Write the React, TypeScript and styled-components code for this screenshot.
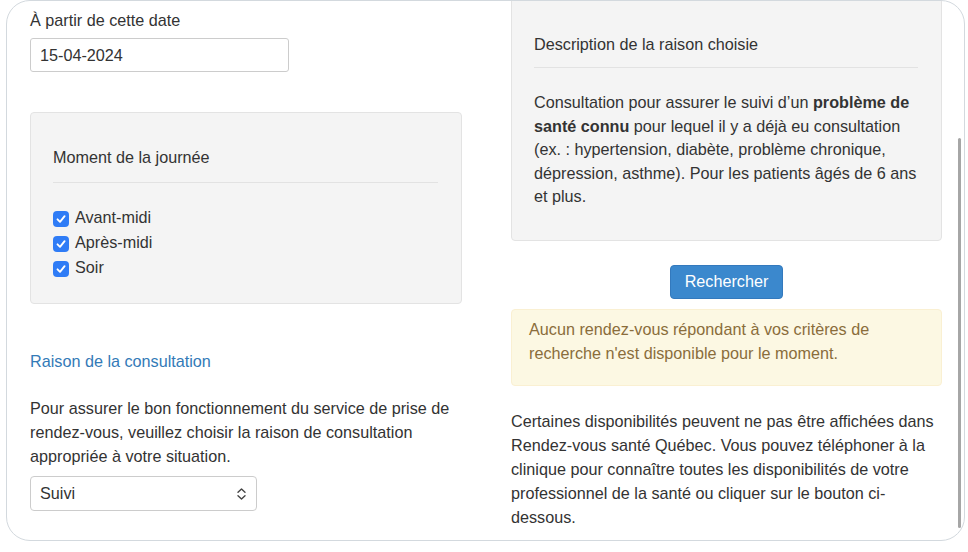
import React from 'react'
import styled, { createGlobalStyle } from 'styled-components'

const GlobalStyle = createGlobalStyle`
  html, body {
    margin: 0;
    padding: 0;
    background: #ffffff;
  }
  body {
    font-family: "Liberation Sans", Arial, sans-serif;
    font-size: 16.2px;
    color: #333333;
  }
  * { box-sizing: border-box; }
`

const Page = styled.div`
  width: 968px;
  height: 552px;
  padding: 0 3px 11px 6px;
`

// le cadre arrondi qui contient le formulaire défilé
const Frame = styled.div`
  position: relative;
  height: 541px;
  border: 1px solid #d3d9de;
  border-radius: 24px;
  overflow: hidden;
  background: #ffffff;
`

const Columns = styled.div`
  display: grid;
  grid-template-columns: 432px 431px;
  column-gap: 49px;
  align-items: start;
  padding: 0 22px 0 23px;
`

const LeftCol = styled.div`
  display: flex;
  flex-direction: column;
  align-items: flex-start;
  padding-top: 9px;
`

const RightCol = styled.div`
  display: flex;
  flex-direction: column;
  margin-top: -20px;
`

const Label = styled.div`
  line-height: 21px;
`

const TextInput = styled.div`
  margin-top: 7px;
  width: 259px;
  height: 34px;
  border: 1px solid #cccccc;
  border-radius: 3px;
  padding: 0 9px;
  display: flex;
  align-items: center;
  background: #fff;
`

const Spacer = styled.div<{ $h: number }>`
  height: ${(p) => p.$h}px;
`

const Well = styled.div<{ $top: number; $bottom: number }>`
  width: 100%;
  background: #f4f4f4;
  border: 1px solid #e3e3e3;
  border-radius: 4px;
  padding: ${(p) => p.$top}px 23px ${(p) => p.$bottom}px 22px;
`

const WellTitle = styled.div`
  line-height: 21px;
`

const Rule = styled.div<{ $gap: number }>`
  height: 1px;
  background: #e2e2e2;
  margin-top: ${(p) => p.$gap}px;
`

const Checks = styled.div`
  margin-top: 22px;
  display: flex;
  flex-direction: column;
`

const CheckRow = styled.label`
  display: flex;
  align-items: center;
  height: 25px;
  line-height: 25px;
`

const Box = styled.span`
  width: 16px;
  height: 16px;
  border-radius: 4px;
  background: #2f7cf6;
  margin-right: 6px;
  margin-top: 3px;
  display: inline-flex;
  align-items: center;
  justify-content: center;
`

const SectionLink = styled.div`
  margin-top: 47px;
  color: #337ab7;
  line-height: 21px;
`

const Para = styled.p<{ $gap: number; $lh?: number }>`
  margin: ${(p) => p.$gap}px 0 0;
  line-height: ${(p) => p.$lh ?? 24}px;
`

const Select = styled.div`
  margin-top: 8px;
  width: 227px;
  height: 35px;
  border: 1px solid #cccccc;
  border-radius: 4px;
  padding: 0 9px;
  display: flex;
  align-items: center;
  justify-content: space-between;
  background: #fff;
`

const Button = styled.button`
  align-self: center;
  margin-top: 24px;
  width: 113px;
  height: 34px;
  border: 1px solid #3379bd;
  border-radius: 4px;
  background: #3b88cd;
  color: #ffffff;
  font-family: "Liberation Sans", Arial, sans-serif;
  font-size: 16.2px;
  padding: 0;
`

const Alert = styled.div`
  margin-top: 10px;
  background: #fcf8e3;
  border: 1px solid #faf0d2;
  border-radius: 4px;
  color: #8a6d3b;
  padding: 7px 18px 20px 17px;
  line-height: 24px;
`

const Scrollbar = styled.div`
  position: absolute;
  right: 3px;
  top: 137px;
  width: 3px;
  height: 390px;
  border-radius: 2px;
  background: #a6a6a6;
`

const CheckMark = () => (
  <svg width="12" height="12" viewBox="0 0 11 11">
    <path d="M2.3 5.8 L4.6 8.1 L8.8 2.9" fill="none" stroke="#fff" strokeWidth="1.7" strokeLinecap="round" strokeLinejoin="round" />
  </svg>
)

const UpDown = () => (
  <svg width="11" height="14" viewBox="0 0 11 14">
    <path d="M2 5.2 L5.5 2 L9 5.2 M2 8.8 L5.5 12 L9 8.8" fill="none" stroke="#444" strokeWidth="1.4" strokeLinecap="round" strokeLinejoin="round" />
  </svg>
)

const moments = ['Avant-midi', 'Après-midi', 'Soir']

export default function App() {
  return (
    <>
      <GlobalStyle />
      <Page>
        <Frame>
          <Columns>
            <LeftCol>
              <Label>À partir de cette date</Label>
              <TextInput>15-04-2024</TextInput>
              <Spacer $h={40} />
              <Well $top={34} $bottom={23}>
                <WellTitle>Moment de la journée</WellTitle>
                <Rule $gap={14} />
                <Checks>
                  {moments.map((m) => (
                    <CheckRow key={m}>
                      <Box>
                        <CheckMark />
                      </Box>
                      {m}
                    </CheckRow>
                  ))}
                </Checks>
              </Well>
              <SectionLink>Raison de la consultation</SectionLink>
              <Para $gap={24}>
                Pour assurer le bon fonctionnement du service de prise de rendez-vous, veuillez choisir la raison de
                consultation appropriée à votre situation.
              </Para>
              <Select>
                <span>Suivi</span>
                <UpDown />
              </Select>
            </LeftCol>
            <RightCol>
              <Well $top={52} $bottom={31}>
                <WellTitle>Description de la raison choisie</WellTitle>
                <Rule $gap={12} />
                <Para $gap={23} $lh={23.5}>
                  Consultation pour assurer le suivi d’un <b>problème de santé connu</b> pour lequel il y a déjà eu
                  consultation (ex. : hypertension, diabète, problème chronique, dépression, asthme). Pour les patients
                  âgés de 6 ans et plus.
                </Para>
              </Well>
              <Button>Rechercher</Button>
              <Alert>
                Aucun rendez-vous répondant à vos critères de recherche n'est disponible pour le moment.
              </Alert>
              <Para $gap={23}>
                Certaines disponibilités peuvent ne pas être affichées dans Rendez-vous santé Québec. Vous pouvez
                téléphoner à la clinique pour connaître toutes les disponibilités de votre professionnel de la santé ou
                cliquer sur le bouton ci-dessous.
              </Para>
            </RightCol>
          </Columns>
          <Scrollbar />
        </Frame>
      </Page>
    </>
  )
}
